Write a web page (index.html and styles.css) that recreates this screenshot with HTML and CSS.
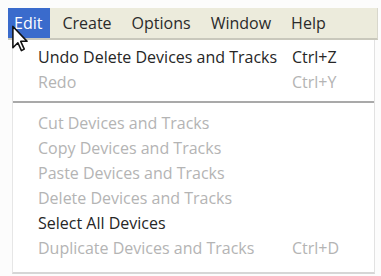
FILE: index.html
```html
<!DOCTYPE html>
<html lang="en">
<head>
    <meta charset="UTF-8">
    <title>Edit Menu</title>
    <link rel="stylesheet" href="styles.css">
</head>
<body>
    <div class="window">
        <div class="menubar">
            <span class="menu-title active">Edit</span>
            <span class="menu-title">Create</span>
            <span class="menu-title">Options</span>
            <span class="menu-title">Window</span>
            <span class="menu-title">Help</span>
        </div>

        <div class="dropdown">
            <div class="item"><span>Undo Delete Devices and Tracks</span><span class="key">Ctrl+Z</span></div>
            <div class="item disabled"><span>Redo</span><span class="key">Ctrl+Y</span></div>
            <div class="separator"></div>
            <div class="item disabled"><span>Cut Devices and Tracks</span></div>
            <div class="item disabled"><span>Copy Devices and Tracks</span></div>
            <div class="item disabled"><span>Paste Devices and Tracks</span></div>
            <div class="item disabled"><span>Delete Devices and Tracks</span></div>
            <div class="item"><span>Select All Devices</span></div>
            <div class="item disabled"><span>Duplicate Devices and Tracks</span><span class="key">Ctrl+D</span></div>
        </div>

        <!-- mouse pointer over the Edit menu -->
        <svg class="cursor" width="18" height="27" viewBox="0 0 12 19">
            <path d="M1 1 L1 16 L4.5 12.5 L7 18 L9 17 L6.5 11.5 L11 11.5 Z" fill="#fff" stroke="#111" stroke-width="1.1" stroke-linejoin="round"/>
        </svg>
    </div>
</body>
</html>
```

FILE: styles.css
```css
body {
    margin: 0;
    background-color: #fcfcfc;
    font-family: "Open Sans", "DejaVu Sans", sans-serif;
}

.window {
    position: relative;
    width: 381px;
    height: 276px;
    padding-top: 8px;
    box-sizing: border-box;
}

.menubar {
    display: flex;
    align-items: center;
    height: 30px;
    margin: 0 3px 0 8px;
    background-color: #ecebdc;
    border-bottom: 2px solid #c9c8bc;
    border-right: 1px solid #d8d7cc;
    font-size: 16px;
    color: #2a2a2a;
}

.menu-title {
    padding: 0 10px;
    height: 30px;
    line-height: 30px;
}

.menu-title.active {
    background-color: #3a6bcc;
    color: #fff;
    padding: 0 8px 0 6px;
    margin-right: 2px;
}

.dropdown {
    margin: 0 6px 0 12px;
    height: 234px;
    background-color: #fff;
    border-left: 1px solid #e6e6e6;
    border-right: 1px solid #e2e2e2;
    border-bottom: 2px solid #d6d6d6;
    padding-top: 5px;
    box-sizing: border-box;
}

.item {
    display: flex;
    justify-content: space-between;
    height: 25px;
    line-height: 25px;
    padding: 0 18px 0 25px;
    font-size: 16px;
    color: #262626;
}

.item .key {
    width: 64px;
}

.item.disabled {
    color: #b4b4b4;
}

.separator {
    height: 0;
    border-top: 2px solid #a9a9a9;
    margin: 6px 0 8px 0;
}

.cursor {
    position: absolute;
    left: 11px;
    top: 25px;
}
```
